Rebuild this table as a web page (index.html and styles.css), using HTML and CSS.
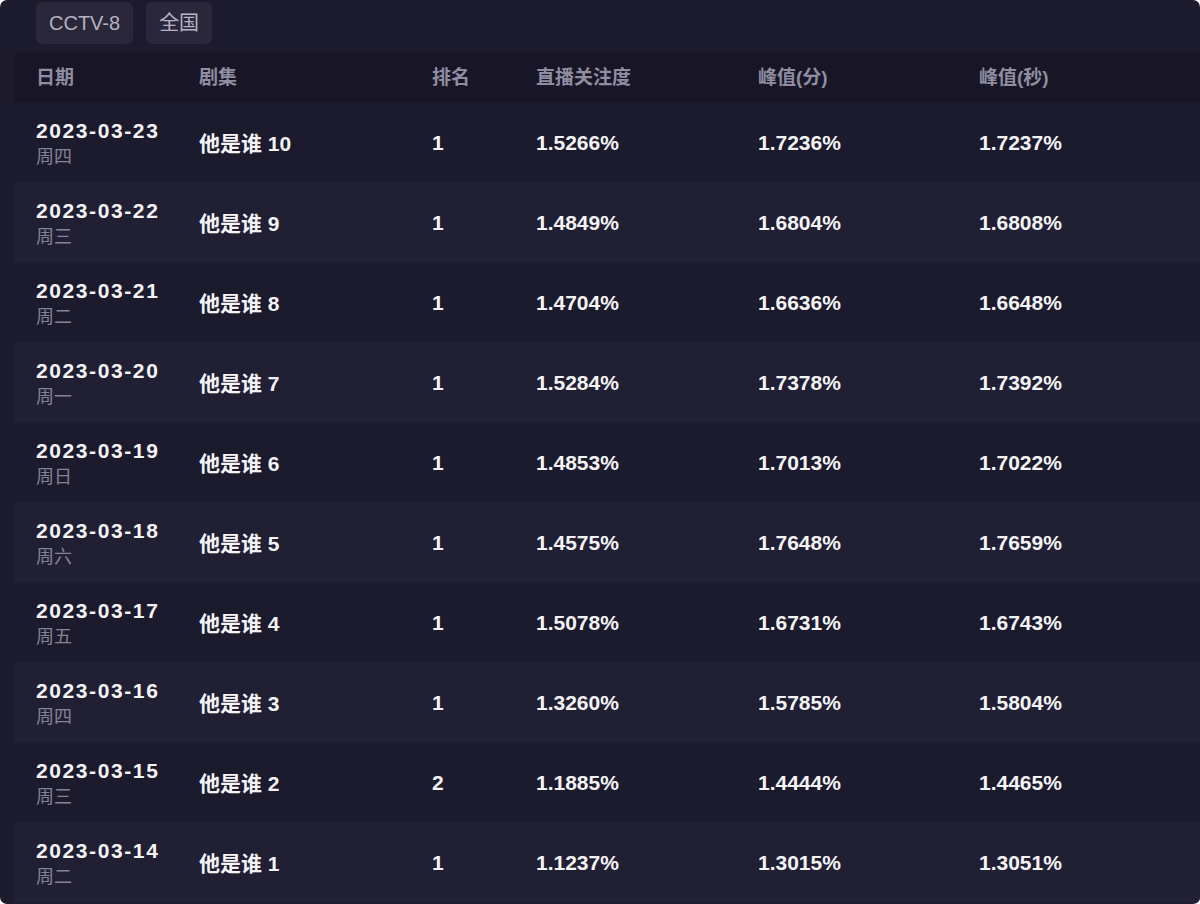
FILE: index.html
```html
<!DOCTYPE html>
<html lang="zh-CN">
<head>
<meta charset="utf-8">
<title>他是谁 收视</title>
<link rel="stylesheet" href="styles.css">
</head>
<body>
<div class="page">
  <div class="tags">
    <span class="tag">CCTV-8</span>
    <span class="tag">全国</span>
  </div>
  <div class="table">
    <div class="row head">
      <div class="cell">日期</div>
      <div class="cell">剧集</div>
      <div class="cell">排名</div>
      <div class="cell">直播关注度</div>
      <div class="cell">峰值(分)</div>
      <div class="cell">峰值(秒)</div>
    </div>
    <div class="row odd">
      <div class="cell date"><span class="d">2023-03-23</span><span class="w">周四</span></div>
      <div class="cell v ep">他是谁 10</div><div class="cell v">1</div>
      <div class="cell v">1.5266%</div><div class="cell v">1.7236%</div><div class="cell v">1.7237%</div>
    </div>
    <div class="row even">
      <div class="cell date"><span class="d">2023-03-22</span><span class="w">周三</span></div>
      <div class="cell v ep">他是谁 9</div><div class="cell v">1</div>
      <div class="cell v">1.4849%</div><div class="cell v">1.6804%</div><div class="cell v">1.6808%</div>
    </div>
    <div class="row odd">
      <div class="cell date"><span class="d">2023-03-21</span><span class="w">周二</span></div>
      <div class="cell v ep">他是谁 8</div><div class="cell v">1</div>
      <div class="cell v">1.4704%</div><div class="cell v">1.6636%</div><div class="cell v">1.6648%</div>
    </div>
    <div class="row even">
      <div class="cell date"><span class="d">2023-03-20</span><span class="w">周一</span></div>
      <div class="cell v ep">他是谁 7</div><div class="cell v">1</div>
      <div class="cell v">1.5284%</div><div class="cell v">1.7378%</div><div class="cell v">1.7392%</div>
    </div>
    <div class="row odd">
      <div class="cell date"><span class="d">2023-03-19</span><span class="w">周日</span></div>
      <div class="cell v ep">他是谁 6</div><div class="cell v">1</div>
      <div class="cell v">1.4853%</div><div class="cell v">1.7013%</div><div class="cell v">1.7022%</div>
    </div>
    <div class="row even">
      <div class="cell date"><span class="d">2023-03-18</span><span class="w">周六</span></div>
      <div class="cell v ep">他是谁 5</div><div class="cell v">1</div>
      <div class="cell v">1.4575%</div><div class="cell v">1.7648%</div><div class="cell v">1.7659%</div>
    </div>
    <div class="row odd">
      <div class="cell date"><span class="d">2023-03-17</span><span class="w">周五</span></div>
      <div class="cell v ep">他是谁 4</div><div class="cell v">1</div>
      <div class="cell v">1.5078%</div><div class="cell v">1.6731%</div><div class="cell v">1.6743%</div>
    </div>
    <div class="row even">
      <div class="cell date"><span class="d">2023-03-16</span><span class="w">周四</span></div>
      <div class="cell v ep">他是谁 3</div><div class="cell v">1</div>
      <div class="cell v">1.3260%</div><div class="cell v">1.5785%</div><div class="cell v">1.5804%</div>
    </div>
    <div class="row odd">
      <div class="cell date"><span class="d">2023-03-15</span><span class="w">周三</span></div>
      <div class="cell v ep">他是谁 2</div><div class="cell v">2</div>
      <div class="cell v">1.1885%</div><div class="cell v">1.4444%</div><div class="cell v">1.4465%</div>
    </div>
    <div class="row even">
      <div class="cell date"><span class="d">2023-03-14</span><span class="w">周二</span></div>
      <div class="cell v ep">他是谁 1</div><div class="cell v">1</div>
      <div class="cell v">1.1237%</div><div class="cell v">1.3015%</div><div class="cell v">1.3051%</div>
    </div>
  </div>
</div>
</body>
</html>
```

FILE: styles.css
```css
html {
  background: #ffffff;
}
body {
  margin: 0;
  font-family: "Liberation Sans", "Noto Sans CJK SC", sans-serif;
}
.page {
  width: 1200px;
  height: 904px;
  background: #1c1a2d;
  border-radius: 7px;
  overflow: hidden;
  padding-top: 2px;
  box-sizing: border-box;
}
.tags {
  display: flex;
  gap: 13px;
  padding-left: 36px;
}
.tag {
  height: 42px;
  line-height: 42px;
  padding: 0 13px;
  background: #292739;
  border-radius: 6px;
  color: #b4b2c3;
  font-size: 20px;
}
.table {
  margin: 8px 0 0 14px;
}
.row {
  display: grid;
  grid-template-columns: 163px 233px 104px 222px 221px 1fr;
  align-items: center;
}
.head {
  height: 51px;
  background: #181626;
  border-radius: 4px 0 0 4px;
}
.head .cell {
  color: #8f8da1;
  font-size: 19px;
  font-weight: bold;
  padding-bottom: 4px;
}
.odd, .even {
  height: 80px;
}
.odd {
  background: #1c1a2d;
}
.even {
  background: #211f33;
}
.cell {
  padding-left: 22px;
  white-space: nowrap;
}
.v {
  color: #f4f4f7;
  font-size: 21px;
  font-weight: bold;
}
.ep {
  padding-bottom: 3px;
}
.date {
  display: flex;
  flex-direction: column;
  padding-top: 2px;
}
.d {
  color: #f4f4f7;
  font-size: 21px;
  font-weight: bold;
  letter-spacing: 1.6px;
  line-height: 27px;
}
.w {
  color: #858398;
  font-size: 18px;
  line-height: 27px;
}
```
